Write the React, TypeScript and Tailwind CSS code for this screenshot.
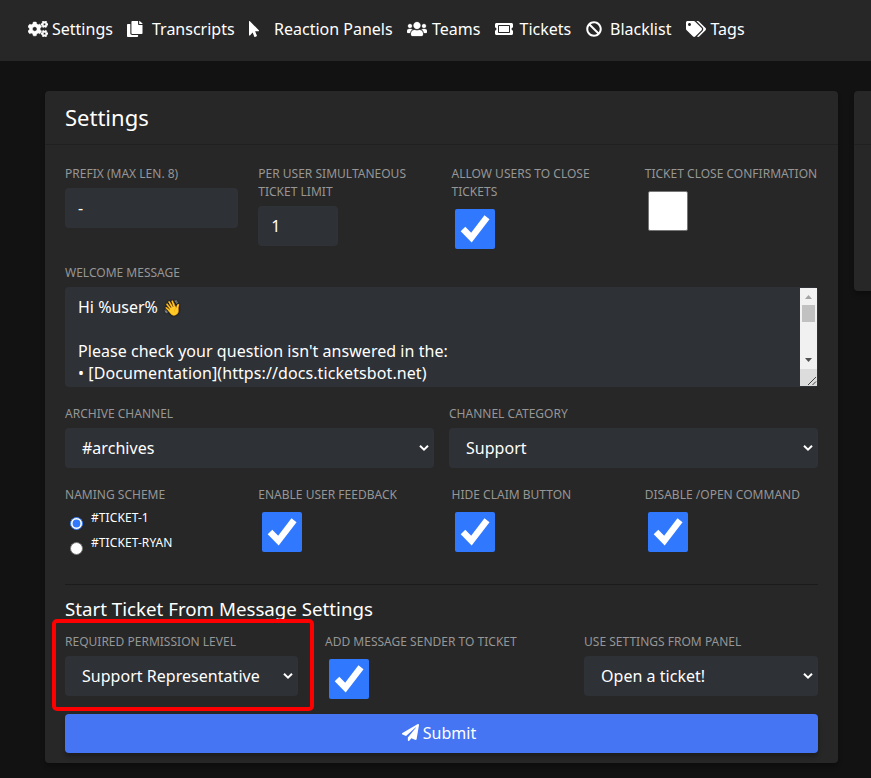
import type { ReactNode } from "react";
import { FaCogs, FaCopy, FaMousePointer, FaUsers, FaTicketAlt, FaBan, FaTags, FaPaperPlane } from "react-icons/fa";

function NavItem({ icon, label, box, text }: { icon: ReactNode; label: string; box: string; text: string }) {
  return (
    <a className={`flex items-center whitespace-nowrap ${box}`}>
      <span className={`flex shrink-0 items-center ${text}`}>{icon}</span>
      {label}
    </a>
  );
}

function Label({ children }: { children: ReactNode }) {
  return <div className="text-xs leading-[18px] tracking-[0.01px] text-[#969696] uppercase">{children}</div>;
}

function Checkbox({ checked = true }: { checked?: boolean }) {
  if (!checked) {
    return <div className="mt-2 ml-[3.5px] size-10 rounded-xs border border-[#767676] bg-white" />;
  }
  return (
    <div className="mt-2 ml-[3.5px] size-10 rounded-xs bg-[#3079ff]">
      <svg viewBox="0 0 40 40" className="size-10">
        <path d="M8 20 L16.4 28.6 L32 8.2" fill="none" stroke="#fff" strokeWidth="6.4" />
      </svg>
    </div>
  );
}

function Select({ value }: { value: string }) {
  return (
    <div className="mt-[5px] flex h-10 items-center justify-between rounded-[4px] bg-[#2e3136] pr-[5px] pl-[17px]">
      <span className="tracking-[0.03px]">{value}</span>
      <svg viewBox="0 0 10 8" className="h-2 w-2.5">
        <path d="M1 1.7 L5 5.7 L9 1.7" fill="none" stroke="#fff" strokeWidth="2" />
      </svg>
    </div>
  );
}

function Radio({ label, on = false }: { label: string; on?: boolean }) {
  return (
    <div className="flex h-[25px] pl-[5px]">
      <svg viewBox="0 0 13 13" className="mt-2 size-[13px]">
        <circle cx="6.5" cy="6.5" r="6" fill="#fff" stroke={on ? "#3079ff" : "#767676"} />
        {on && <circle cx="6.5" cy="6.5" r="3.9" fill="#3079ff" />}
      </svg>
      <span className="ml-2 text-xs leading-[18px] tracking-[0.08px] uppercase">{label}</span>
    </div>
  );
}

function Scrollbar() {
  return (
    <div className="mt-px mr-px flex h-[98px] w-[17px] flex-col bg-[#f1f1f1]">
      <svg viewBox="0 0 17 17" className="size-[17px]">
        <path d="M5 11 L8.5 7 L12 11 Z" fill="#a3a3a3" />
      </svg>
      <div className="mx-0.5 h-[17px] bg-[#c1c1c1]" />
      <svg viewBox="0 0 17 17" className="mt-auto size-[17px]">
        <path d="M5 6 L8.5 10 L12 6 Z" fill="#505050" />
      </svg>
      <svg viewBox="0 0 17 17" className="size-[17px] bg-[#dcdcdc]">
        <path d="M8 16 L16 8 M12.5 16 L16 12.5" stroke="#444" strokeWidth="1" />
      </svg>
    </div>
  );
}

export default function App() {
  return (
    <div className="h-[778px] overflow-hidden bg-[#121212] font-['Noto_Sans',sans-serif] text-base text-white">
      <nav className="flex h-[61px] bg-[#272727] pb-[3px] pl-7">
        <NavItem icon={<FaCogs className="h-4 w-5" stroke="currentColor" strokeWidth="14" />} label="Settings" box="w-[99px]" text="w-6" />
        <NavItem
          icon={<FaCopy className="h-4 w-[15.5px]" preserveAspectRatio="none" />}
          label="Transcripts"
          box="w-[122px]"
          text="w-[25px]"
        />
        <NavItem icon={<FaMousePointer className="h-4 w-2.5" />} label="Reaction Panels" box="w-[158px]" text="w-[25px]" />
        <NavItem icon={<FaUsers className="h-4 w-5" stroke="currentColor" strokeWidth="8" />} label="Teams" box="w-[88px]" text="w-[25px]" />
        <NavItem icon={<FaTicketAlt className="h-4 w-[18px]" />} label="Tickets" box="w-[91px]" text="w-[24.5px]" />
        <NavItem icon={<FaBan className="h-4 w-4" />} label="Blacklist" box="w-[100px]" text="w-6" />
        <NavItem icon={<FaTags className="h-4 w-5" />} label="Tags" box="w-[99px]" text="w-[24.5px]" />
      </nav>

      <main className="flex items-start gap-4 pt-[30px] pl-[45px]">
        <section className="h-[672px] w-[793px] shrink-0 rounded-[4px] bg-[#272727] shadow-[0_4px_4px_rgba(0,0,0,0.25)]">
          <header className="h-[54px] border-b border-[#202020] px-5 text-[22px] leading-[53px]">Settings</header>

          <div className="px-5 pt-5">
            <div className="grid h-[99px] grid-cols-4 gap-5">
              <div>
                <Label>Prefix (max len. 8)</Label>
                <div className="mt-[5px] h-10 rounded-[4px] bg-[#2e3136] px-[13px] leading-10">-</div>
              </div>
              <div>
                <Label>Per user simultaneous ticket limit</Label>
                <div className="mt-[5px] h-10 w-20 rounded-[4px] bg-[#2e3136] px-[13px] leading-10">1</div>
              </div>
              <div>
                <Label>Allow users to close tickets</Label>
                <Checkbox />
              </div>
              <div className="whitespace-nowrap">
                <Label>Ticket close confirmation</Label>
                <Checkbox checked={false} />
              </div>
            </div>

            <div className="h-[141px]">
              <Label>Welcome message</Label>
              <div className="mt-[5px] flex h-[100px] justify-between rounded-[4px] bg-[#2e3136]">
                <div className="pt-[9px] pl-[13px] leading-[22px]">
                  <div>
                    Hi %user%{" "}
                    <span className="ml-px inline-block h-[22px] align-top text-[15px] drop-shadow-[0_0_1px_#000]">👋</span>
                  </div>
                  <div className="h-[22px]" />
                  <div className="tracking-[0.04px]">Please check your question isn't answered in the:</div>
                  <div className="tracking-[0.09px]">• [Documentation](https://docs.ticketsbot.net)</div>
                </div>
                <Scrollbar />
              </div>
            </div>

            <div className="grid h-[81px] grid-cols-2 gap-[15px]">
              <div>
                <Label>Archive channel</Label>
                <Select value="#archives" />
              </div>
              <div>
                <Label>Channel category</Label>
                <Select value="Support" />
              </div>
            </div>

            <div className="grid h-[98px] grid-cols-4 gap-5">
              <div>
                <Label>Naming scheme</Label>
                <div className="mt-[5px]">
                  <Radio label="#ticket-1" on />
                  <Radio label="#ticket-ryan" />
                </div>
              </div>
              <div>
                <Label>Enable user feedback</Label>
                <Checkbox />
              </div>
              <div>
                <Label>Hide claim button</Label>
                <Checkbox />
              </div>
              <div>
                <Label>Disable /open command</Label>
                <Checkbox />
              </div>
            </div>

            <div className="h-[49px] border-t border-[#1b1b1b] text-[18.72px] leading-[48px]">
              Start Ticket From Message Settings
            </div>

            <div className="flex h-[81px]">
              <div className="relative w-[233px]">
                <Label>Required permission level</Label>
                <Select value="Support Representative" />
                <div className="absolute -top-3.5 -left-[13px] h-[92px] w-[262px] rounded-[5px] border-4 border-[#ff0000]" />
              </div>
              <div className="ml-[27px] w-[233px]">
                <Label>Add message sender to ticket</Label>
                <Checkbox />
              </div>
              <div className="ml-[26px] w-[234px]">
                <Label>Use settings from panel</Label>
                <Select value="Open a ticket!" />
              </div>
            </div>

            <button className="flex h-[39px] w-full items-center justify-center gap-1 rounded-[4px] bg-[#4575f3] pr-[5px] pb-0.5 shadow-[0_4px_4px_rgba(0,0,0,0.25)]">
              <FaPaperPlane className="size-[17px]" />
              Submit
            </button>
          </div>
        </section>

        <aside className="h-[200px] w-[793px] shrink-0 rounded-[4px] bg-[#272727] shadow-[0_4px_4px_rgba(0,0,0,0.25)]">
          <header className="h-[54px] border-b border-[#202020]" />
        </aside>
      </main>
    </div>
  );
}
